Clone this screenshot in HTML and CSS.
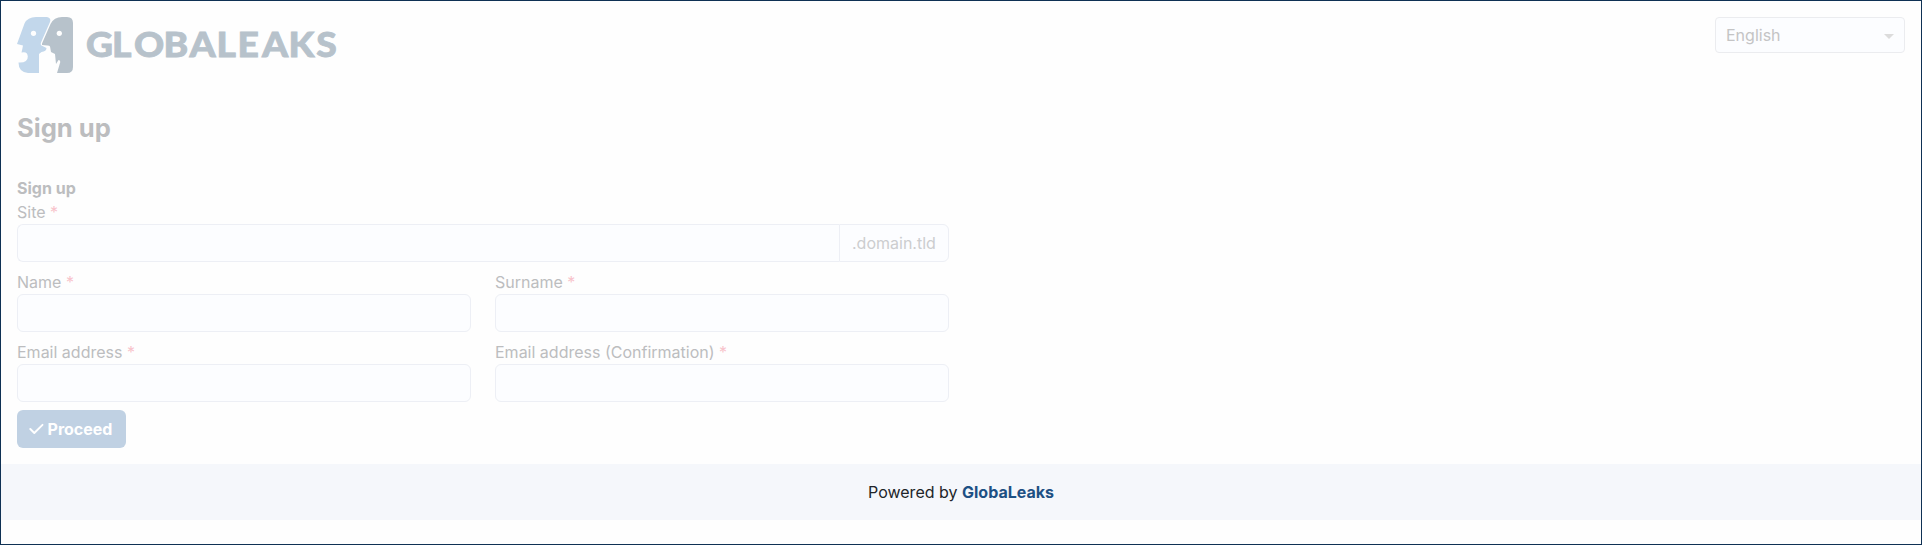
FILE: index.html
```html
<!DOCTYPE html>
<html lang="en">
<head>
<meta charset="utf-8">
<title>Sign up</title>
<link rel="stylesheet" href="styles.css">
</head>
<body>
<div class="page">
  <header class="header">
    <svg class="logo" width="330" height="56" viewBox="0 0 330 56">
      <path fill="#c2d7eb" d="M19 0H30Q34.500 1 33 5L24 25.500Q23 28 25.500 29L29.500 31Q29.500 34.500 24.500 35L22 37V56H11Q1.500 55 1.500 45.500Q11 46 10.800 39.500Q10.500 34 4.500 35.500L5.300 32L6 28.500L0 27L7.500 6.500Q10.500 0 19 0Z"/>
      <path fill="#b7c2cb" d="M45 0H50Q56 0 56 6V50Q56 56 50 56H40L43.300 45Q43.300 43 41.500 43L39 47L38 37L34 35L33 29.500Q32 28 25 28L25 26.500L33.500 7Q37 0 45 0Z"/>
      <circle class="eye" cx="16.500" cy="16.300" r="2.600"/>
      <circle class="eye" cx="42.300" cy="16.300" r="2.600"/>
      <text class="wordmark" transform="scale(1.08 1)" x="63.900 88 108.300 135.700 159.700 184.700 204.200 226.800 251.400 277" y="39.900">GLOBALEAKS</text>
    </svg>
    <div class="language">English<span class="caret"></span></div>
  </header>
  <main class="content">
    <h1 class="title">Sign up</h1>
    <form class="form">
      <div class="subtitle">Sign up</div>
      <div class="field field-wide">
        <label class="label" for="site">Site <span class="required">*</span></label>
        <div class="group">
          <input class="input input-joined" id="site">
          <span class="suffix">.domain.tld</span>
        </div>
      </div>
      <div class="field">
        <label class="label" for="name">Name <span class="required">*</span></label>
        <input class="input" id="name">
      </div>
      <div class="field">
        <label class="label" for="surname">Surname <span class="required">*</span></label>
        <input class="input" id="surname">
      </div>
      <div class="field">
        <label class="label" for="email">Email address <span class="required">*</span></label>
        <input class="input" id="email">
      </div>
      <div class="field">
        <label class="label" for="confirm">Email address (Confirmation) <span class="required">*</span></label>
        <input class="input" id="confirm">
      </div>
      <button class="button" type="button">
        <svg width="15" height="12" viewBox="0 0 15 12"><path d="M1.300 6L5.300 10L13.500 1.800" fill="none" stroke="#fff" stroke-width="1.900" stroke-linecap="round" stroke-linejoin="round"/></svg>
        <span>Proceed</span>
      </button>
    </form>
  </main>
  <footer class="footer"><span>Powered by <a class="link">GlobaLeaks</a></span></footer>
</div>
</body>
</html>
```
FILE: styles.css
```css
* { box-sizing: border-box; }
body { margin: 0; background: #fff; font: 16px/24px Inter, sans-serif; color: #bcbdbf; }
.page { height: 545px; border: 1px solid #0f3154; background: #fefefe; overflow: hidden; }
.header { display: flex; justify-content: space-between; align-items: flex-start; padding: 16px 16px 0; }
.logo { display: block; }
.eye { fill: #fefefe; }
.wordmark { font: 900 34.5px Lato, sans-serif; fill: #b7c2cb; stroke: #b7c2cb; stroke-width: 0.8px; }
.language { display: flex; align-items: center; justify-content: space-between; width: 190px; height: 36px; padding: 0 10px; border: 1px solid #ebecef; border-radius: 4px; background: #fcfdff; color: #c4c4c5; }
.caret { border: 5px solid transparent; border-top-color: #dcdcdc; border-bottom: 0; margin-top: 2px; }
.content { padding: 0 16px; }
.title { margin: 39px 0 32px; font-size: 25.6px; line-height: 32px; font-weight: 700; }
.form { display: grid; grid-template-columns: 454px 454px; column-gap: 24px; row-gap: 8px; }
.subtitle { grid-column: 1 / -1; font-weight: 700; margin-bottom: -8px; }
.field-wide { grid-column: 1 / -1; }
.label { display: block; }
.required { color: #f8c3cb; }
.group { display: flex; }
.input { display: block; width: 100%; height: 38px; border: 1px solid #edeff5; border-radius: 6px; background: #fcfdff; }
.input-joined { flex: 1; width: auto; border-right: 0; border-radius: 6px 0 0 6px; }
.suffix { width: 110px; height: 38px; padding: 6px 12px; border: 1px solid #edeff5; border-radius: 0 6px 6px 0; background: #fcfdff; color: #cccdcf; }
.button { display: flex; align-items: center; justify-content: center; gap: 4px; width: 109px; height: 38px; padding: 0 2px 0 0; border: 0; border-radius: 6px; background: #c0d1e3; color: #fff; font: 700 16px/24px Inter, sans-serif; }
.footer { display: flex; align-items: center; justify-content: center; height: 56px; margin-top: 16px; background: #f5f7fb; color: #212529; }
.link { color: #1d5084; font-weight: 700; }
```
